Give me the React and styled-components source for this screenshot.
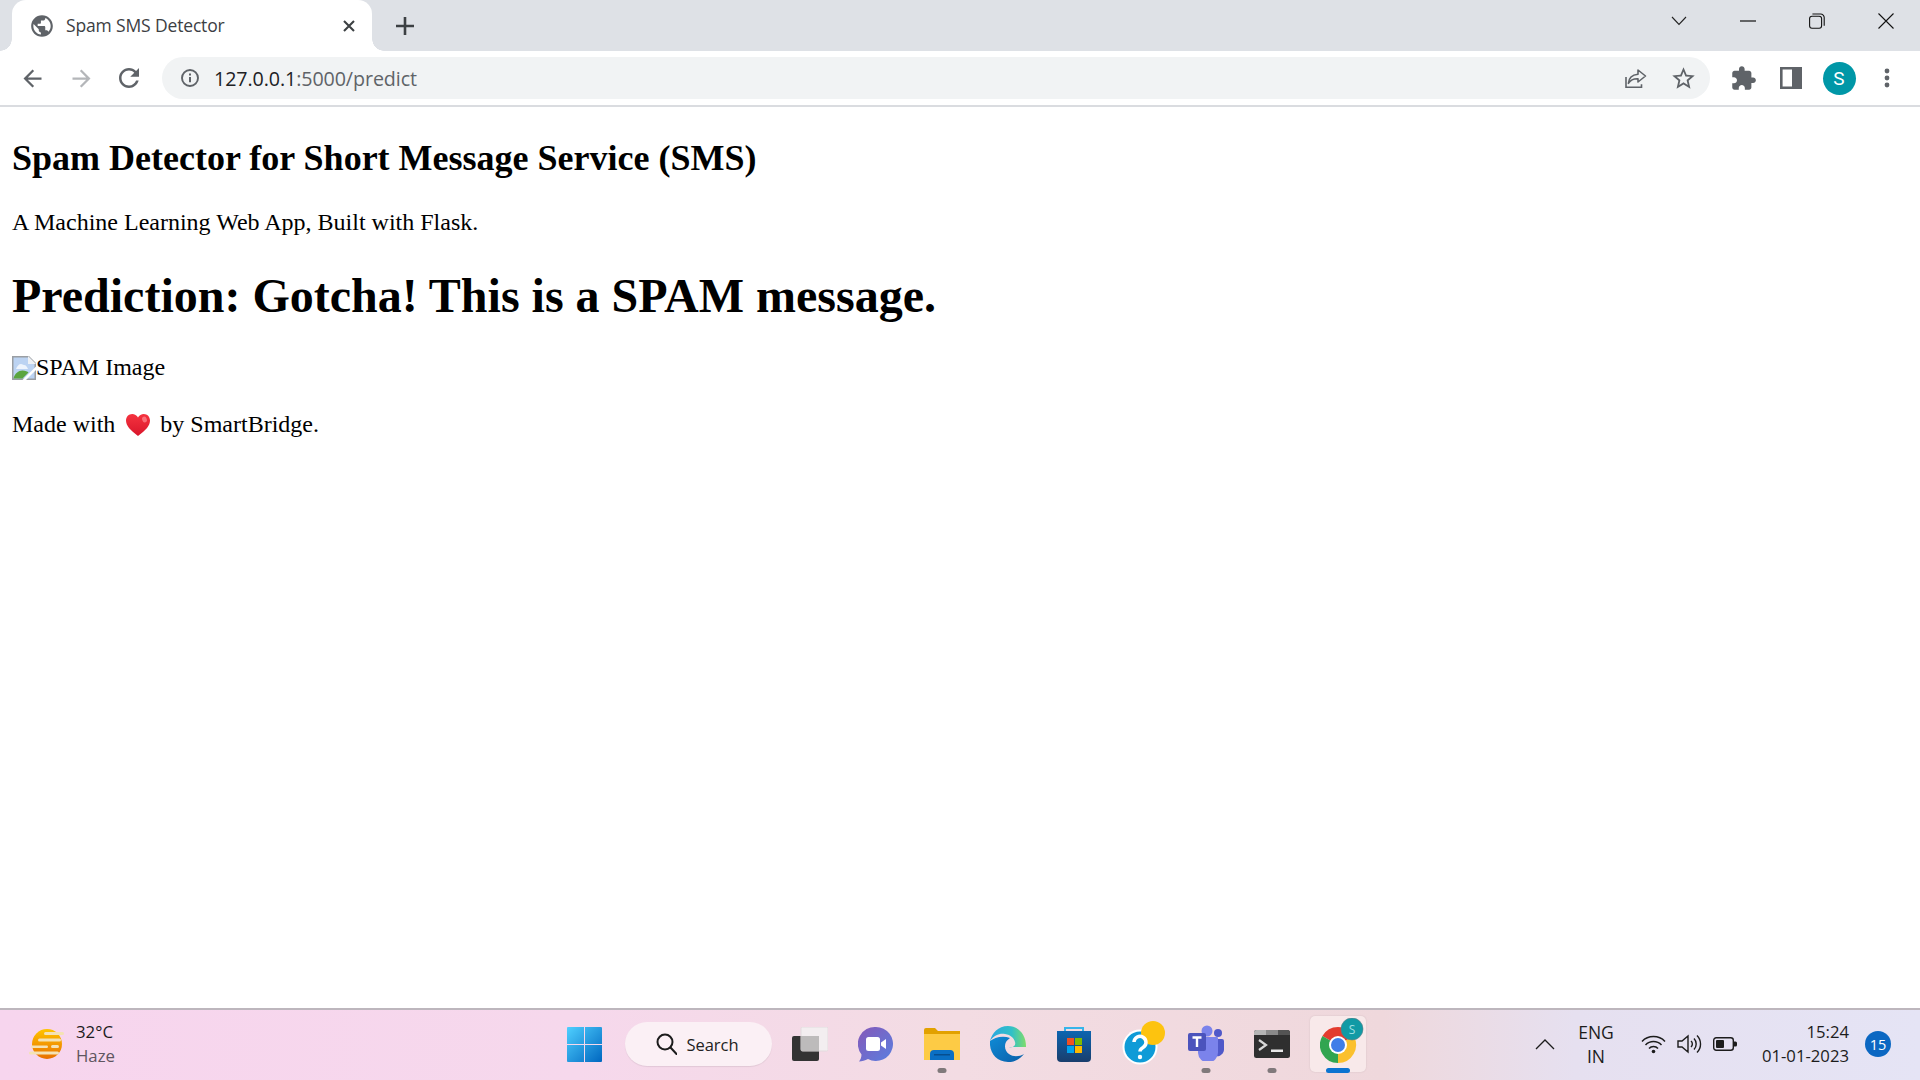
import React from "react";
import styled, { createGlobalStyle } from "styled-components";

const Global = createGlobalStyle`
  html, body { margin: 0; padding: 0; height: 100%; background: #fff; overflow: hidden; }
  #root { height: 100%; }
`;
const Shell = styled.div`
  height: 1080px; display: flex; flex-direction: column; font-family: "Open Sans", "Noto Sans", sans-serif;
`;
const TabStrip = styled.div`
  height: 51px; flex: none; background: #dee1e6; display: flex; padding-left: 12px;
`;
const Tab = styled.div`
  width: 360px; height: 51px; background: #fff; border-radius: 14px 14px 0 0; display: flex; align-items: center;
  padding: 0 16px 0 17px; box-sizing: border-box; position: relative; color: #3c4043;
  &::before, &::after { content: ""; position: absolute; bottom: 0; width: 12px; height: 12px; }
  &::before { left: -12px; background: radial-gradient(circle at 0 0, #dee1e6 11.5px, #fff 12px); }
  &::after { right: -12px; background: radial-gradient(circle at 100% 0, #dee1e6 11.5px, #fff 12px); }
`;
const TabTitle = styled.span`
  flex: 1; margin: 0 0 2px 11px; font: 400 17.5px "Open Sans", sans-serif; letter-spacing: -0.15px; white-space: nowrap;
`;
const NewTab = styled.div`
  margin-left: 21px; width: 24px; height: 51px; display: flex; align-items: center; justify-content: center;
`;
const WindowControls = styled.div`
  margin-left: auto; display: flex; align-items: center; height: 42px;
`;
const WinButton = styled.div`
  width: ${p => p.$w}px; display: flex; justify-content: center;
`;
const Toolbar = styled.div`
  height: 54px; flex: none; display: flex; align-items: center; background: #fff; padding: 0 9px 0 8px; border-bottom: 2px solid #dadce0; box-sizing: content-box;
`;
const NavButton = styled.div`
  width: 48px; height: 48px; display: flex; align-items: center; justify-content: center; flex: none;
  color: ${p => p.$off ? "#b4b6b9" : "#5f6368"};
`;
const ForwardButton = styled(NavButton)`
  margin-left: 1px;
`;
const Omnibox = styled.div`
  flex: 1; height: 42px; margin: 0 9px; background: #f1f3f4; border-radius: 21px; display: flex; align-items: center; padding: 0 3px 0 18px; box-sizing: border-box;
`;
const Url = styled.div`
  margin-left: 14px; font: 400 19.7px "Open Sans", sans-serif; letter-spacing: -0.1px; color: #202124; flex: 1;
  span { color: #5f6368; }
`;
const Main = styled.main`
  flex: 1; min-height: 0; padding: 0 12px; font-family: "Liberation Serif", "Times New Roman", serif; color: #000; background: #fff; overflow: hidden;
`;
const Heading = styled.h2`
  font-size: 36px; font-weight: 700; margin: 30px 0;
`;
const Lead = styled.p`
  font-size: 24px; margin: 0;
`;
const Result = styled.h1`
  font-size: 48px; font-weight: 700; margin: 32px 0 31px;
`;
const Line = styled.p`
  font-size: 24px; margin: 0 0 30px; display: flex; align-items: center; white-space: pre;
`;
const Taskbar = styled.footer`
  height: 72px; flex: none; box-sizing: border-box; border-top: 2px solid #bdb6bd; position: relative; padding-bottom: 2px;
  background: linear-gradient(90deg, #f7d5ee 0%, #f6d8ec 30%, #f3dce3 50%, #efd8dc 72%, #e6e0f0 82%, #e5e4f5 100%);
  display: flex; align-items: center;
`;
const Weather = styled.div`
  width: 551px; flex: none; display: flex; align-items: center; padding-left: 29px; box-sizing: border-box; gap: 11px;
`;
const WeatherText = styled.div`
  font-size: 16.8px; line-height: 24px; color: #1c1c1c;
  small { display: block; font-size: 16.8px; color: #5f5660; }
`;
const Slot = styled.div`
  width: 66px; height: 68px; flex: none; display: flex; align-items: center; justify-content: center; position: relative;
`;
const ActiveBox = styled.div`
  width: 56px; height: 56px; background: #f8e9ea; border-radius: 5px; box-shadow: 0 0 2px rgba(0,0,0,.12); display: flex; align-items: center; justify-content: center;
`;
const Dot = styled.span`
  position: absolute; bottom: 5px; left: 50%; transform: translateX(-50%); height: 5px; border-radius: 3px;
  width: ${p => p.$active ? 24 : 9}px; background: ${p => p.$active ? "#0b74d1" : "#80797b"};
`;
const SearchPill = styled.div`
  width: 147px; height: 44px; margin: 0 5px 0 8px; border-radius: 22px; background: #fbf0f5; box-shadow: 0 1px 1px rgba(0,0,0,.08); flex: none;
  display: flex; align-items: center; justify-content: center; gap: 9px; padding-right: 2px; box-sizing: border-box; font-size: 16.5px; color: #222;
`;
const Tray = styled.div`
  position: absolute; right: 0; top: 0; bottom: 2px; display: flex; align-items: center; color: #1c1c1c;
`;
const Lang = styled.div`
  width: 60px; text-align: center; font-size: 17.5px; line-height: 24px; margin: 0 9px 0 11px;
`;
const TrayIcon = styled.div`
  width: 36px; display: flex; justify-content: center;
`;
const Clock = styled.div`
  width: 103px; margin-left: 3px; text-align: right; font-size: 16.7px; line-height: 24px; white-space: nowrap;
`;
const Badge = styled.div`
  width: 26px; height: 26px; border-radius: 50%; background: #0b67c2; color: #fff; font-size: 14.5px; display: flex; align-items: center; justify-content: center; margin: 0 29px 0 16px;
`;
const Avatar = styled.div`
  width: 33px; height: 33px; border-radius: 50%; background: #0097a7; color: #fff; font: 400 19px "Roboto", sans-serif; display: flex; align-items: center; justify-content: center;
`;

const M = ({ d, size = 24, color = "currentColor" }) => (
  <svg width={size} height={size} viewBox="0 0 24 24" fill={color}><path d={d} /></svg>
);
const P = {
  back: "M20 11H7.83l5.59-5.59L12 4l-8 8 8 8 1.41-1.41L7.83 13H20v-2z",
  fwd: "M12 4l-1.41 1.41L16.17 11H4v2h12.17l-5.58 5.59L12 20l8-8z",
  reload: "M17.65 6.35C16.2 4.9 14.21 4 12 4c-4.42 0-7.99 3.58-7.99 8s3.57 8 7.99 8c3.73 0 6.84-2.55 7.73-6h-2.08c-.82 2.33-3.04 4-5.65 4-3.31 0-6-2.69-6-6s2.69-6 6-6c1.66 0 3.14.69 4.22 1.78L13 11h7V4l-2.35 2.35z",
  globe: "M12 2C6.48 2 2 6.48 2 12s4.48 10 10 10 10-4.48 10-10S17.52 2 12 2zm-1 17.93c-3.95-.49-7-3.85-7-7.93 0-.62.08-1.21.21-1.79L9 15v1c0 1.1.9 2 2 2v1.93zm6.9-2.54c-.26-.81-1-1.39-1.9-1.39h-1v-3c0-.55-.45-1-1-1H8v-2h2c.55 0 1-.45 1-1V7h2c1.1 0 2-.9 2-2v-.41c2.93 1.19 5 4.06 5 7.41 0 2.08-.8 3.97-2.1 5.39z",
  puzzle: "M20.5 11H19V7c0-1.1-.9-2-2-2h-4V3.5C13 2.12 11.88 1 10.5 1S8 2.12 8 3.5V5H4c-1.1 0-1.99.9-1.99 2v3.8H3.5c1.49 0 2.7 1.21 2.7 2.7s-1.21 2.7-2.7 2.7H2V20c0 1.1.9 2 2 2h3.8v-1.5c0-1.49 1.21-2.7 2.7-2.7 1.49 0 2.7 1.21 2.7 2.7V22H17c1.1 0 2-.9 2-2v-4h1.5c1.38 0 2.5-1.12 2.5-2.5S21.88 11 20.5 11z",
  star: "M22 9.24l-7.19-.62L12 2 9.19 8.63 2 9.24l5.46 4.73L5.82 21 12 17.27 18.18 21l-1.63-7.03L22 9.24zM12 15.4l-3.76 2.27 1-4.28-3.32-2.88 4.38-.38L12 6.1l1.71 4.04 4.38.38-3.32 2.88 1 4.28L12 15.4z",
};

const Close = () => <svg width="14" height="14" viewBox="0 0 14 14" stroke="#3c4043" strokeWidth="2.1"><path d="M2 2l10 10M12 2L2 12" /></svg>;
const Plus = () => <svg width="18" height="18" viewBox="0 0 18 18" stroke="#3c4043" strokeWidth="2.6"><path d="M9 0v18M0 9h18" /></svg>;
const WinChevron = () => <svg width="16" height="10" viewBox="0 0 16 10" fill="none" stroke="#222" strokeWidth="1.1"><path d="M1 1l7 7.5L15 1" /></svg>;
const WinMin = () => <svg width="16" height="2" viewBox="0 0 16 2"><path d="M0 1h16" stroke="#111" strokeWidth="1.2" /></svg>;
const WinMax = () => <svg width="16" height="16" viewBox="0 0 16 16" fill="none" stroke="#111" strokeWidth="1.1"><rect x=".6" y="3.2" width="12" height="12" rx="2.4" /><path d="M3.4 1h8.2a3.6 3.6 0 0 1 3.6 3.6v8.2" /></svg>;
const WinClose = () => <svg width="16" height="16" viewBox="0 0 16 16" stroke="#111" strokeWidth="1.1"><path d="M.5.5l15 15M15.5.5l-15 15" /></svg>;
const Info = () => (
  <svg width="20" height="20" viewBox="0 0 20 20" fill="none"><circle cx="10" cy="10" r="8" stroke="#5f6368" strokeWidth="1.9" /><path d="M10 9v5.2M10 5.6v1.8" stroke="#5f6368" strokeWidth="2" /></svg>
);
const Share = () => (
  <svg width="24" height="24" viewBox="0 0 24 24" fill="none" stroke="#5f6368" strokeWidth="1.6"><path d="M3 11v10.2h15.5v-3" /><path d="M15 4l7.5 6-7.5 6v-3.2c-4.2-.2-7.5 1.2-9.6 4.6.3-5.2 3.6-8.6 9.6-9.2V4z" strokeLinejoin="round" /></svg>
);
const Panel = () => (
  <svg width="22" height="22" viewBox="0 0 22 22"><path fillRule="evenodd" d="M0 0h22v22H0zM2.6 2.6v16.8h9.4V2.6z" fill="#5f6368" /></svg>
);
const More = () => (
  <svg width="6" height="20" viewBox="0 0 6 20" fill="#5f6368"><circle cx="3" cy="3" r="2.4" /><circle cx="3" cy="10" r="2.4" /><circle cx="3" cy="17" r="2.4" /></svg>
);
const Broken = () => (
  <svg width="24" height="24" viewBox="0 0 24 24" style={{ flex: "none" }}>
    <path d="M0 0h17l7 7v17H0z" fill="#9a9ea3" />
    <path d="M1.500 1.500h14.500l6.500 6.500v14.500H1.500z" fill="#bcd3f2" />
    <path d="M4 13c1-3 3-5 5-5 1.500 0 2 1 3 1 2 0 3 2 4 4z" fill="#eef4fc" />
    <path d="M1.500 22.500c1-5 5-8 9-8 3 0 5 1 6 2l-6 6z" fill="#5ba53f" />
    <path d="M16 0v8h8z" fill="#eef1f5" />
    <path d="M10.500 24L24 10.500v3.500L14 24z" fill="#fff" />
  </svg>
);
const Heart = () => (
  <svg width="26" height="24" viewBox="0 0 26 24" style={{ margin: "0 9px 0 10px" }}>
    <defs><linearGradient id="ht" x1="0" y1="0" x2="0" y2="1"><stop offset="0" stopColor="#f5333f" /><stop offset="1" stopColor="#d9162b" /></linearGradient></defs>
    <path d="M13 23C5 17 1 12.5 1 7.5 1 3.8 3.8 1 7.2 1 9.600 1 11.800 2.300 13 4.500 14.200 2.300 16.400 1 18.800 1 22.200 1 25 3.800 25 7.500 25 12.500 21 17 13 23z" fill="url(#ht)" />
    <ellipse cx="19.500" cy="6.500" rx="2.300" ry="3" fill="#ff8c93" opacity=".7" transform="rotate(-20 19.500 6.500)" />
  </svg>
);
const Sun = () => (
  <svg width="36" height="32" viewBox="0 0 36 32">
    <defs><linearGradient id="sn" x1="0" y1="0" x2="0" y2="1"><stop offset="0" stopColor="#ffc400" /><stop offset="1" stopColor="#e86f00" /></linearGradient></defs>
    <circle cx="18" cy="16" r="15" fill="url(#sn)" />
    <g fill="#f4e2b4">
      <rect x="15" y="4" width="20" height="3" rx="1.500" /><rect x="9" y="10.500" width="23" height="3" rx="1.500" /><rect x="2" y="17.500" width="17" height="2.500" rx="1.200" /><rect x="22" y="17" width="8" height="3" rx="1.500" /><rect x="0" y="23.500" width="30" height="3" rx="1.500" />
    </g>
  </svg>
);
const Start = () => (
  <svg width="35" height="35" viewBox="0 0 35 35">
    <defs><linearGradient id="ws" x1="0" y1="0" x2="1" y2="1"><stop offset="0" stopColor="#4fd0ff" /><stop offset="1" stopColor="#0067c0" /></linearGradient></defs>
    <path d="M0 1a1 1 0 0 1 1-1h16v17H0zM18 0h16a1 1 0 0 1 1 1v16H18zM0 18h17v17H1a1 1 0 0 1-1-1zM18 18h17v16a1 1 0 0 1-1 1H18z" fill="url(#ws)" />
  </svg>
);
const SearchIcon = () => (
  <svg width="21" height="22" viewBox="0 0 21 22" fill="none" stroke="#1c1c1c" strokeWidth="2"><circle cx="9" cy="9" r="7.500" /><path d="M14.500 14.500l6 6.500" strokeLinecap="round" /></svg>
);
const TaskView = () => (
  <svg width="36" height="34" viewBox="0 0 36 34">
    <rect x="0" y="9" width="27" height="25" rx="2" fill="#333" />
    <rect x="9" y="0" width="27" height="24" rx="1.500" fill="#f3eef0" stroke="#e2dcde" />
    <rect x="9" y="9" width="18" height="15" fill="#bdbbbb" />
  </svg>
);
const Chat = () => (
  <svg width="36" height="36" viewBox="0 0 36 36">
    <defs><linearGradient id="ch" x1="0" y1="0" x2="1" y2="1"><stop offset="0" stopColor="#8658b8" /><stop offset="1" stopColor="#5a7fe0" /></linearGradient></defs>
    <path d="M18 1a17 17 0 1 1-8 32c-3 1.500-6 2.500-9 2.500 1.500-2 2.500-4 2.500-7A17 17 0 0 1 18 1z" fill="url(#ch)" />
    <rect x="8" y="11" width="14" height="14" rx="2.500" fill="#fff" /><path d="M23 16.500l5-3.500v10l-5-3.500z" fill="#fff" />
  </svg>
);
const Folder = () => (
  <svg width="36" height="32" viewBox="0 0 36 32">
    <path d="M0 2a2 2 0 0 1 2-2h9l3 3h22v8H0z" fill="#e2a100" />
    <path d="M0 6h36v26H0z" fill="#fdcb45" />
    <path d="M6 32v-6a4 4 0 0 1 4-4h16a4 4 0 0 1 4 4v6z" fill="#0a6fc4" />
    <rect x="10" y="26" width="16" height="1.500" fill="#064e8f" />
  </svg>
);
const Edge = () => (
  <svg width="36" height="36" viewBox="0 0 36 36">
    <defs>
      <linearGradient id="e1" x1="0" y1="0" x2="1" y2="0"><stop offset="0" stopColor="#2aa6e0" /><stop offset=".6" stopColor="#31c0c8" /><stop offset="1" stopColor="#7fdc6a" /></linearGradient>
      <linearGradient id="e2" x1="0" y1="0" x2="1" y2="1"><stop offset="0" stopColor="#0f8bd6" /><stop offset="1" stopColor="#0a5ea8" /></linearGradient>
    </defs>
    <path d="M36 20C36 8 28 0 18 0 8 0 2 7 0 15c4-6 10-8 15-7 6 1 9 4 10 8 1 3-1 6-6 5h17z" fill="url(#e1)" />
    <path d="M0 15c-1 11 6 21 18 21 7 0 12-3 16-8-5 3-11 3-15 0-4-3-5-8-3-12 1-2 3-3 4-4-8-3-16 0-20 3z" fill="url(#e2)" />
  </svg>
);
const Store = () => (
  <svg width="36" height="36" viewBox="0 0 36 36">
    <defs><linearGradient id="st" x1="0" y1="0" x2="0" y2="1"><stop offset="0" stopColor="#0d65b0" /><stop offset="1" stopColor="#193e6d" /></linearGradient></defs>
    <path d="M9 6V2h18v4" fill="none" stroke="#36b5ea" strokeWidth="2" />
    <path d="M1 5h34v27a4 4 0 0 1-4 4H5a4 4 0 0 1-4-4z" fill="url(#st)" />
    <rect x="11" y="12" width="7" height="7" fill="#f25022" /><rect x="19" y="12" width="7" height="7" fill="#7fba00" /><rect x="11" y="20" width="7" height="7" fill="#00a4ef" /><rect x="19" y="20" width="7" height="7" fill="#ffb900" />
  </svg>
);
const Help = () => (
  <svg width="44" height="44" viewBox="0 0 44 44" style={{ marginLeft: "8px", marginTop: "-3px" }}>
    <circle cx="18" cy="26" r="17.500" fill="#fff" /><circle cx="18" cy="26" r="15.500" fill="#0f9bd7" />
    <circle cx="31" cy="12" r="12" fill="#fdc30f" />
    <path d="M12 21a6 6 0 1 1 9 5.500c-2 1.200-3 2-3 4" fill="none" stroke="#fff" strokeWidth="3.500" /><circle cx="18" cy="36" r="2.200" fill="#fff" />
  </svg>
);
const Teams = () => (
  <svg width="36" height="36" viewBox="0 0 36 36" style={{ marginTop: "-2px" }}>
    <circle cx="19" cy="6" r="5.500" fill="#7b83eb" /><circle cx="30" cy="8" r="4" fill="#5059c9" />
    <path d="M25 14h9a2 2 0 0 1 2 2v9a7 7 0 0 1-11 5z" fill="#5059c9" />
    <path d="M10 12h19a1 1 0 0 1 1 1v14a10 10 0 0 1-20 1z" fill="#7b83eb" />
    <rect x="0" y="8" width="18" height="18" rx="2" fill="#4b53bc" />
    <path d="M4.500 12.500h9M9 12.500v9.500" stroke="#fff" strokeWidth="2.400" />
  </svg>
);
const Term = () => (
  <svg width="36" height="28" viewBox="0 0 36 28">
    <rect width="36" height="28" rx="2.500" fill="#2f2f2f" />
    <path d="M2.500 0H12v5H0V2.500A2.500 2.500 0 0 1 2.500 0z" fill="#b5b5b5" /><rect x="12" width="12" height="5" fill="#8a8a8a" /><path d="M24 0h9.500A2.500 2.500 0 0 1 36 2.500V5H24z" fill="#545454" />
    <path d="M5 10l7 5-7 5" fill="none" stroke="#d8d8d8" strokeWidth="2.200" /><rect x="17" y="19.500" width="12" height="2.500" fill="#e8e8e8" />
  </svg>
);
const Chrome = () => (
  <svg width="44" height="46" viewBox="0 0 44 46" style={{ marginLeft: "8px", marginTop: "-7px", flex: "none" }}>
    <path d="M18 27L2.410 18A18 18 0 0 1 33.590 18Z" fill="#e33b2e" />
    <path d="M18 27L33.590 18A18 18 0 0 1 18 45Z" fill="#fbc02d" />
    <path d="M18 27L18 45A18 18 0 0 1 2.410 18Z" fill="#31a550" />
    <circle cx="18" cy="27" r="9" fill="#fff" /><circle cx="18" cy="27" r="7" fill="#3f7ee8" />
    <circle cx="32" cy="11" r="11" fill="#119aa5" stroke="#5c7d84" strokeWidth=".6" />
    <text x="32" y="15.500" textAnchor="middle" fontSize="12" fill="#9fe0e4" fontFamily="Open Sans">S</text>
  </svg>
);
const TrayUp = () => <svg width="20" height="11" viewBox="0 0 20 11" fill="none" stroke="#1c1c1c" strokeWidth="1.300"><path d="M1 10l9-9 9 9" /></svg>;
const Wifi = () => (
  <svg width="25" height="20" viewBox="0 0 25 20" fill="none" stroke="#1c1c1c" strokeWidth="1.500"><path d="M1 7.500a16 16 0 0 1 23 0M4.500 11a11 11 0 0 1 16 0M8 14.500a6 6 0 0 1 9 0" /><circle cx="12.500" cy="17.500" r="1.800" fill="#1c1c1c" stroke="none" /></svg>
);
const Volume = () => (
  <svg width="25" height="20" viewBox="0 0 25 20" fill="none" stroke="#1c1c1c" strokeWidth="1.400"><path d="M1 7h4l6-5v16l-6-5H1zM14 7a4 4 0 0 1 0 6M17 4.500a8 8 0 0 1 0 11M20 1.500a12 12 0 0 1 0 17" /></svg>
);
const Battery = () => (
  <svg width="24" height="14" viewBox="0 0 24 14"><rect x=".7" y=".7" width="19.600" height="12.600" rx="2.500" fill="none" stroke="#1c1c1c" strokeWidth="1.400" /><rect x="3" y="3" width="8" height="8" rx="1" fill="#1c1c1c" /><path d="M21 4.500h1.500a1.500 1.500 0 0 1 1.500 1.500v2a1.500 1.500 0 0 1-1.500 1.500H21z" fill="#1c1c1c" /></svg>
);

export default function App() {
  return (
    <Shell>
      <Global />
      <TabStrip>
        <Tab>
          <M d={P.globe} size={26} color="#5f6368" />
          <TabTitle>Spam SMS Detector</TabTitle>
          <Close />
        </Tab>
        <NewTab><Plus /></NewTab>
        <WindowControls>
          <WinButton $w={68}><WinChevron /></WinButton>
          <WinButton $w={69}><WinMin /></WinButton>
          <WinButton $w={69}><WinMax /></WinButton>
          <WinButton $w={69}><WinClose /></WinButton>
        </WindowControls>
      </TabStrip>
      <Toolbar>
        <NavButton><M d={P.back} size={27} /></NavButton>
        <ForwardButton $off><M d={P.fwd} size={27} /></ForwardButton>
        <NavButton><M d={P.reload} size={30} /></NavButton>
        <Omnibox>
          <Info />
          <Url>127.0.0.1<span>:5000/predict</span></Url>
          <NavButton><Share /></NavButton>
          <NavButton><M d={P.star} size={27} color="#5f6368" /></NavButton>
        </Omnibox>
        <NavButton><M d={P.puzzle} size={27} /></NavButton>
        <NavButton><Panel /></NavButton>
        <NavButton><Avatar>S</Avatar></NavButton>
        <NavButton><More /></NavButton>
      </Toolbar>
      <Main>
        <Heading>Spam Detector for Short Message Service (SMS)</Heading>
        <Lead>A Machine Learning Web App, Built with Flask.</Lead>
        <Result>Prediction: Gotcha! This is a SPAM message.</Result>
        <Line><Broken />SPAM Image</Line>
        <Line>Made with<Heart />by SmartBridge.</Line>
      </Main>
      <Taskbar>
        <Weather>
          <Sun />
          <WeatherText>32°C<small>Haze</small></WeatherText>
        </Weather>
        <Slot><Start /></Slot>
        <SearchPill><SearchIcon />Search</SearchPill>
        <Slot><TaskView /></Slot>
        <Slot><Chat /></Slot>
        <Slot><Folder /><Dot /></Slot>
        <Slot><Edge /></Slot>
        <Slot><Store /></Slot>
        <Slot><Help /></Slot>
        <Slot><Teams /><Dot /></Slot>
        <Slot><Term /><Dot /></Slot>
        <Slot><ActiveBox><Chrome /></ActiveBox><Dot $active /></Slot>
        <Tray>
          <TrayUp />
          <Lang>ENG<br />IN</Lang>
          <TrayIcon><Wifi /></TrayIcon>
          <TrayIcon><Volume /></TrayIcon>
          <TrayIcon><Battery /></TrayIcon>
          <Clock>15:24<br />01-01-2023</Clock>
          <Badge>15</Badge>
        </Tray>
      </Taskbar>
    </Shell>
  );
}
